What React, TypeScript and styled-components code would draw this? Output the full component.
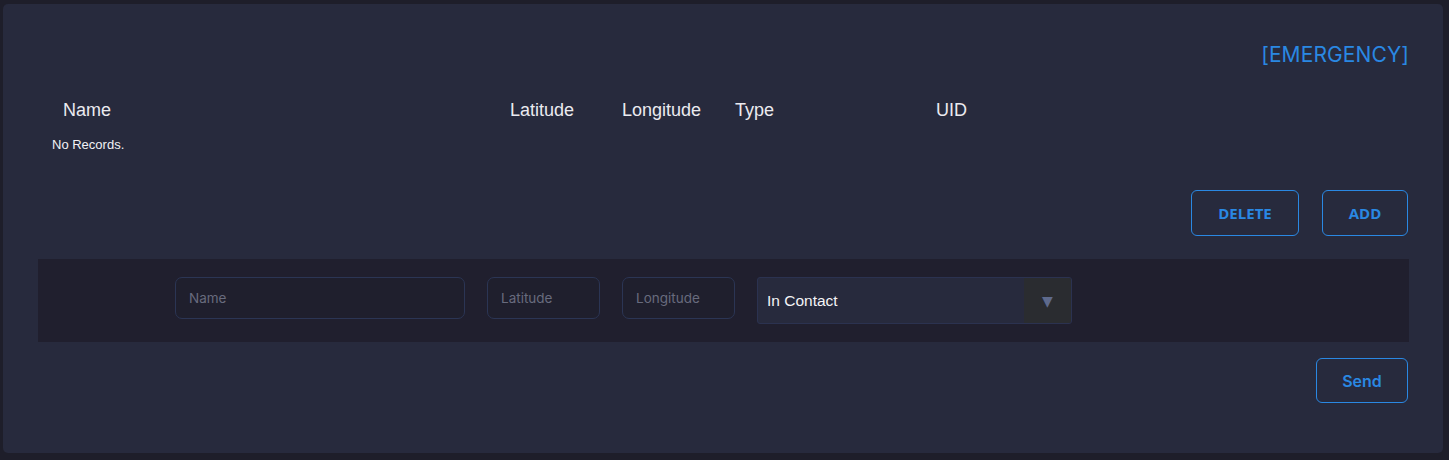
import React from "react";
import styled, { createGlobalStyle } from "styled-components";

const GlobalStyle = createGlobalStyle`
  html, body {
    margin: 0;
    padding: 0;
    background: #1e1e2a;
  }
  * {
    box-sizing: border-box;
  }
`;

const Page = styled.div`
  padding: 4px 6px 7px 3px;
  min-height: 460px;
`;

const Card = styled.div`
  width: 1440px;
  height: 449px;
  background: #272a3d;
  border-radius: 5px;
  padding: 36px 34px 0 35px;
  display: flex;
  flex-direction: column;
`;

const TitleRow = styled.div`
  display: flex;
  justify-content: flex-end;
`;

const Title = styled.h2`
  margin: 0;
  font-family: Inter, "Open Sans", sans-serif;
  font-weight: 400;
  font-size: 21px;
  line-height: 30px;
  color: #2a88e3;
  letter-spacing: 0.1px;
`;

const Table = styled.div`
  margin-top: 27px;
  padding-left: 14px;
  font-family: "Liberation Sans", Arial, sans-serif;
`;

const HeaderRow = styled.div`
  display: grid;
  grid-template-columns: 447px 112px 113px 201px 1fr;
`;

const HeaderCell = styled.div`
  padding-left: 11px;
  font-size: 18px;
  line-height: 26px;
  color: #ebebf0;
`;

const EmptyText = styled.div`
  margin-top: 14px;
  font-size: 13px;
  line-height: 16px;
  color: #f2f2f5;
`;

const ButtonRow = styled.div`
  display: flex;
  justify-content: flex-end;
  gap: 23px;
  margin-top: 37px;
  padding-right: 1px;
`;

const OutlineButton = styled.button<{ $width: number; $height?: number; $poppins?: boolean }>`
  width: ${(p) => p.$width}px;
  height: ${(p) => p.$height ?? 46}px;
  background: transparent;
  border: 1px solid #2a88e3;
  border-radius: 6px;
  color: #2a88e3;
  font-family: ${(p) => (p.$poppins ? 'Inter, "Open Sans", sans-serif' : '"Open Sans", sans-serif')};
  font-weight: ${(p) => (p.$poppins ? 600 : 700)};
  font-size: ${(p) => (p.$poppins ? 16 : 15)}px;
  cursor: pointer;
  padding: 0;
`;

const FormStrip = styled.div`
  margin-top: 23px;
  height: 83px;
  background: #201f2e;
  display: flex;
  align-items: flex-start;
  gap: 22px;
  padding: 18px 0 0 137px;
`;

const TextInput = styled.input<{ $width: number }>`
  width: ${(p) => p.$width}px;
  height: 42px;
  background: #1f1f2d;
  border: 1px solid #2b3554;
  border-radius: 7px;
  padding: 0 13px;
  font-family: Inter, "Open Sans", sans-serif;
  font-size: 13.5px;
  color: #d8d8e0;
  outline: none;
  &::placeholder {
    color: #686b7d;
  }
`;

const SelectBox = styled.div`
  width: 315px;
  height: 47px;
  display: flex;
  border: 1px solid #2b3250;
  border-radius: 3px;
  background: #272a3d;
  overflow: hidden;
`;

const SelectValue = styled.div`
  flex: 1;
  display: flex;
  align-items: center;
  padding-left: 9px;
  font-family: "Liberation Sans", Arial, sans-serif;
  font-size: 15.5px;
  color: #f4f4f6;
`;

const SelectArrow = styled.div`
  width: 47px;
  background: #2a2c30;
  display: flex;
  align-items: center;
  justify-content: center;
  color: #5e6a8c;
  font-family: "DejaVu Sans", sans-serif;
  font-size: 14px;
`;

const SendRow = styled.div`
  display: flex;
  justify-content: flex-end;
  margin-top: 16px;
  padding-right: 1px;
`;

const headers = [
  { label: "Name" },
  { label: "Latitude" },
  { label: "Longitude" },
  { label: "Type" },
  { label: "UID" },
];

export default function App() {
  return (
    <>
      <GlobalStyle />
      <Page>
        <Card>
          <TitleRow>
            <Title>[EMERGENCY]</Title>
          </TitleRow>
          <Table>
            <HeaderRow>
              {headers.map((h) => (
                <HeaderCell key={h.label}>{h.label}</HeaderCell>
              ))}
            </HeaderRow>
            <EmptyText>No Records.</EmptyText>
          </Table>
          <ButtonRow>
            <OutlineButton $width={108}>DELETE</OutlineButton>
            <OutlineButton $width={86}>ADD</OutlineButton>
          </ButtonRow>
          <FormStrip>
            <TextInput $width={290} placeholder="Name" />
            <TextInput $width={113} placeholder="Latitude" />
            <TextInput $width={113} placeholder="Longitude" />
            <SelectBox>
              <SelectValue>In Contact</SelectValue>
              <SelectArrow>▼</SelectArrow>
            </SelectBox>
          </FormStrip>
          <SendRow>
            <OutlineButton $width={92} $height={45} $poppins>
              Send
            </OutlineButton>
          </SendRow>
        </Card>
      </Page>
    </>
  );
}
